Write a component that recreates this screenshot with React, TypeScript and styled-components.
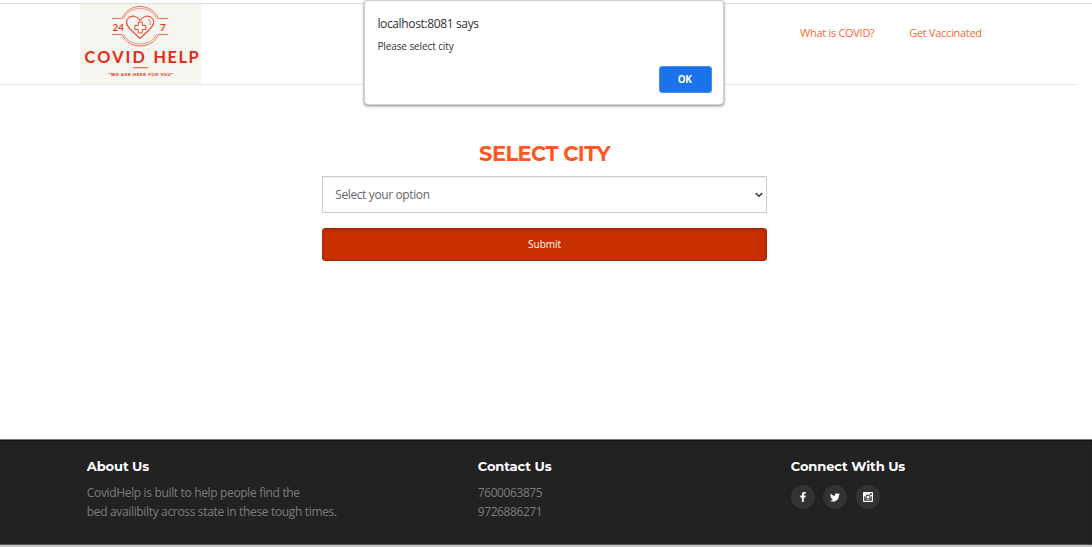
import React from "react";
import styled, { createGlobalStyle } from "styled-components";

const GlobalStyle = createGlobalStyle`
  * { box-sizing: border-box; }
  body { margin: 0; background: #fff; font-family: "Open Sans", sans-serif; overflow: hidden; }
`;

const Page = styled.div`
  display: flex;
  flex-direction: column;
  height: 547px;
  padding-top: 3px;
  background: #fff;
`;

const Header = styled.header`
  display: flex;
  justify-content: space-between;
  height: 82px;
  border-top: 1px solid #dfdfe1;
  padding-left: 80px;
  background: linear-gradient(#e9e9e9, #e9e9e9) left bottom / 1078px 1px no-repeat;
`;

const Logo = styled.svg`
  display: block;
  width: 121px;
  height: 80px;
  background: #f4f5ef;
`;

const Nav = styled.nav`
  display: flex;
  gap: 34.7px;
  padding: 20px 110.2px 0 0;
`;

const NavLink = styled.a`
  font-size: 11px;
  line-height: 17px;
  letter-spacing: -0.29px;
  color: #ff6430;
  text-decoration: none;
`;

const Main = styled.main`
  display: flex;
  flex-direction: column;
  flex: 1;
  width: 445px;
  margin-left: 322px;
  padding-top: 55px;
`;

const Title = styled.h1`
  margin: 0 0 8px;
  font: 700 21px/28px Montserrat, Inter, sans-serif;
  letter-spacing: -0.57px;
  text-align: center;
  white-space: nowrap;
  color: #ff5722;
`;

const SelectBox = styled.div`
  display: flex;
  align-items: center;
  justify-content: space-between;
  height: 37px;
  padding: 0 3px 0 12.2px;
  border: 1px solid #ccc;
  box-shadow: inset 0 1px 1px rgba(0, 0, 0, 0.06);
  font-size: 12px;
  letter-spacing: -0.38px;
  color: #666;
`;

const SubmitButton = styled.button`
  height: 33px;
  margin-top: 15px;
  padding: 0 0 1px;
  border: 1px solid #ad2b00;
  border-radius: 3px;
  background: #c83000;
  box-shadow: inset 0 2px 3px rgba(0, 0, 0, 0.14);
  font: 400 10px/16px "Open Sans", sans-serif;
  letter-spacing: -0.05px;
  color: #fff;
`;

const Footer = styled.footer`
  display: grid;
  grid-template-columns: 391px 313px 1fr;
  height: 108px;
  padding: 17px 0 0 86.8px;
  border-top: 1px solid #777;
  border-bottom: 2px solid #c5c5c5;
  background: #222;
  box-shadow: inset 0 1px 1px #111, inset 0 -1px 0 #555;
`;

const FooterTitle = styled.h2`
  margin: 0 0 9px;
  font: 700 13.1px/18px Montserrat, Inter, sans-serif;
  letter-spacing: -0.13px;
  color: #fff;
`;

const FooterText = styled.p<{ $spacing: string }>`
  margin: 0;
  font-size: 12px;
  line-height: 18.6px;
  letter-spacing: ${(p) => p.$spacing};
  color: #7c7c7c;
  white-space: nowrap;
`;

const Socials = styled.div`
  display: flex;
  gap: 8.5px;
  padding-top: 1px;
`;

const SocialLink = styled.a`
  display: grid;
  place-items: center;
  width: 24px;
  height: 24px;
  border-radius: 50%;
  background: #333;
`;

const Dialog = styled.div`
  position: absolute;
  top: 0;
  left: 364px;
  display: flex;
  flex-direction: column;
  width: 360px;
  height: 105px;
  padding: 14px 11px 11px 12.4px;
  border: 1px solid #d0d0d0;
  border-radius: 4px;
  background: #fff;
  box-shadow: 0 1px 3px rgba(0, 0, 0, 0.5);
  color: #303134;
`;

const DialogTitle = styled.div`
  font-size: 12px;
  line-height: 17px;
  letter-spacing: -0.36px;
`;

const DialogText = styled.div`
  margin-top: 7px;
  font-size: 10px;
  line-height: 14px;
  letter-spacing: -0.1px;
`;

const OkButton = styled.button`
  align-self: flex-end;
  width: 53px;
  height: 27px;
  margin-top: 13px;
  padding: 0 2px 2px 0;
  border: 1px solid #4b8cf0;
  border-radius: 3px;
  background: #1a73e8;
  font: 700 10px/14px "Open Sans", sans-serif;
  letter-spacing: -0.6px;
  color: #fff;
`;

function CovidLogo() {
  return (
    <Logo viewBox="0 0 121 80" fill="none" stroke="#ea4a36" fontFamily="Montserrat, Lato, sans-serif">
      <g strokeWidth="0.8">
        <path d="M32 14.5H42C45.500 7 52 2.500 60 2.500S75 7 78.500 14.500H88" />
        <path d="M43.500 14.500C47 8 53 4.500 60 4.500S73.500 8 76.500 14.500" opacity="0.7" />
        <path d="M32 30.500H42C45.500 38 52 42 60 42S75 38 78.500 30.500H88" />
        <path d="M43.500 30.500C47 36.500 53 40 60 40S73.500 36.500 76.500 30.500" opacity="0.7" />
      </g>
      <path d="M60 34.500 50.500 25.500C46.500 21.500 45.500 17.500 48 14.500C51.500 10.500 57 12 60 16.500C63 12 69 10.500 72.500 14.500C75 17.500 73.500 21.500 69.500 25.500Z" strokeWidth="1.1" />
      <path d="M68 15.300Q71.500 17 70 21" strokeWidth="0.8" />
      <path d="M58.300 18h4v3.500h3.500v4h-3.500V29h-4v-3.500h-3.500v-4h3.500Z" strokeWidth="1" />
      <g fill="#e62a14" stroke="none">
        <text x="32.500" y="26.500" fontSize="10" fontWeight="500" fontFamily="Lato, sans-serif" textLength="11.500">24</text>
        <text x="80" y="26.500" fontSize="10" fontWeight="500" fontFamily="Lato, sans-serif">7</text>
        <g fontFamily="Lato, sans-serif" fontWeight="700" fontSize="16.300">
          <text x="4.500" y="58.500" textLength="60.500">COVID</text>
          <text x="73.500" y="58.500" textLength="45">HELP</text>
        </g>
        <text x="28.500" y="71.900" fontSize="4.100" fontWeight="700" textLength="64.500">"WE ARE HERE FOR YOU"</text>
      </g>
      <path d="M53 63.700H68" strokeWidth="1" />
    </Logo>
  );
}

export default function App() {
  return (
    <>
      <GlobalStyle />
      <Page>
        <Header>
          <CovidLogo />
          <Nav>
            <NavLink>What is COVID?</NavLink>
            <NavLink>Get Vaccinated</NavLink>
          </Nav>
        </Header>
        <Main>
          <Title>SELECT CITY</Title>
          <SelectBox>
            Select your option
            <svg width="8" height="6" viewBox="0 0 8 6" fill="none" stroke="#444" strokeWidth="1.700">
              <path d="M0.700 1 4 4.300 7.300 1" />
            </svg>
          </SelectBox>
          <SubmitButton>Submit</SubmitButton>
        </Main>
        <Footer>
          <div>
            <FooterTitle>About Us</FooterTitle>
            <FooterText $spacing="-0.34px">CovidHelp is built to help people find the</FooterText>
            <FooterText $spacing="-0.34px">bed availibilty across state in these tough times.</FooterText>
          </div>
          <div>
            <FooterTitle>Contact Us</FooterTitle>
            <FooterText $spacing="-0.42px">7600063875</FooterText>
            <FooterText $spacing="-0.42px">9726886271</FooterText>
          </div>
          <div>
            <FooterTitle>Connect With Us</FooterTitle>
            <Socials>
              <SocialLink>
                <svg width="6" height="10" viewBox="0 0 6 10" fill="#fff">
                  <path d="M5.700 0.100V1.700H4.700C4 1.700 3.800 2 3.800 2.500V3.600H5.600L5.400 5.400H3.800V10H1.900V5.400H0.300V3.600H1.900V2.300C1.900 0.800 2.800 0 4.300 0Z" />
                </svg>
              </SocialLink>
              <SocialLink>
                <svg width="10" height="9" viewBox="0 0 24 20" fill="#fff">
                  <path d="M24 2.400a10 10 0 0 1-2.800.8A5 5 0 0 0 23.300.5a10 10 0 0 1-3.100 1.200A4.900 4.900 0 0 0 11.800 6.200 14 14 0 0 1 1.700 1a4.900 4.900 0 0 0 1.500 6.600A5 5 0 0 1 1 7v.1a4.900 4.900 0 0 0 3.900 4.800 5 5 0 0 1-2.200.1 4.900 4.900 0 0 0 4.600 3.400A10 10 0 0 1 0 17.500 14 14 0 0 0 21.500 5a10 10 0 0 0 2.500-2.600Z" />
                </svg>
              </SocialLink>
              <SocialLink>
                <svg width="10" height="10" viewBox="0 0 10 10">
                  <path fill="#fff" fillRule="evenodd" d="M1 0H9Q10 0 10 1V9Q10 10 9 10H1Q0 10 0 9V1Q0 0 1 0ZM7 1.200V2.900H8.800V1.200ZM1.200 4.200V8.800H8.800V4.200H7.900A3 3 0 1 1 2.100 4.200Z" />
                  <circle cx="5" cy="5" r="2.500" fill="#333" />
                  <circle cx="5" cy="5" r="1.500" fill="#fff" />
                </svg>
              </SocialLink>
            </Socials>
          </div>
        </Footer>
      </Page>
      <Dialog role="alertdialog">
        <DialogTitle>localhost:8081 says</DialogTitle>
        <DialogText>Please select city</DialogText>
        <OkButton>OK</OkButton>
      </Dialog>
    </>
  );
}
